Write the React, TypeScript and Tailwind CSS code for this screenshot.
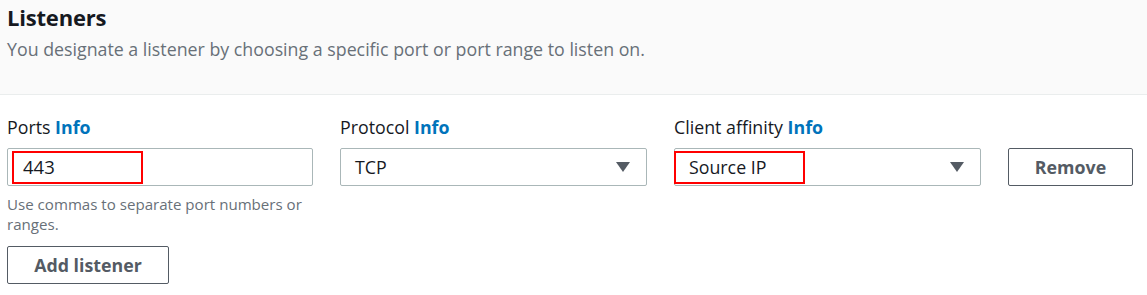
import React from "react";

const Caret = () => (
  <svg width="16" height="12" viewBox="0 0 16 12" className="shrink-0">
    <path d="M1 1 L15 1 L8 11 Z" fill="#545b64" />
  </svg>
);

export default function App() {
  return (
    <div
      className="w-[1147px] h-[295px] bg-white text-[#16191f] overflow-hidden"
      style={{ fontFamily: '"Open Sans", "Noto Sans", Arial, sans-serif' }}
    >
      <div className="h-[95px] bg-[#fafafa] border-b border-[#eaeded] px-[7px] pt-[2px]">
        <h2 className="text-[22px] font-bold leading-[30px] tracking-[-0.2px]">Listeners</h2>
        <p className="mt-[4px] text-[17.8px] leading-[26px] text-[#687078]">
          You designate a listener by choosing a specific port or port range to listen on.
        </p>
      </div>

      <div className="flex items-start gap-[27px] px-[7px] pt-[20px]">
        <div className="w-[306px] flex flex-col">
          <div className="text-[17.8px] leading-[24px] h-[24px]">
            Ports <span className="font-bold text-[#0073bb]">Info</span>
          </div>
          <div className="mt-[9px] h-[38px] border border-[#aab7b8] rounded-[2px] flex items-center pl-[4px]">
            <div className="w-[131px] h-[33px] border-2 border-[#ff0000] flex items-center pl-[9px] text-[18.5px]">
              443
            </div>
          </div>
          <p className="mt-[8px] text-[15.1px] leading-[20px] text-[#687078]">
            Use commas to separate port numbers or
            <br />
            ranges.
          </p>
          <button className="mt-[12px] w-[162px] h-[38px] border border-[#545b64] rounded-[2px] text-[17.8px] font-bold text-[#545b64] bg-white">
            Add listener
          </button>
        </div>

        <div className="w-[307px] flex flex-col">
          <div className="text-[17.8px] leading-[24px] h-[24px]">
            Protocol <span className="font-bold text-[#0073bb]">Info</span>
          </div>
          <div className="mt-[9px] h-[38px] border border-[#aab7b8] rounded-[2px] flex items-center justify-between pl-[14px] pr-[15px] text-[17.8px]">
            <span>TCP</span>
            <Caret />
          </div>
        </div>

        <div className="w-[307px] flex flex-col">
          <div className="text-[17.8px] leading-[24px] h-[24px]">
            Client affinity <span className="font-bold text-[#0073bb]">Info</span>
          </div>
          <div className="mt-[9px] h-[38px] border border-[#aab7b8] rounded-[2px] flex items-center justify-between pr-[15px] text-[17.8px]">
            <div className="w-[131px] h-[33px] border-2 border-[#ff0000] flex items-center pl-[13px] -ml-px">
              Source IP
            </div>
            <Caret />
          </div>
        </div>

        <button className="mt-[33px] w-[125px] h-[38px] border border-[#545b64] rounded-[2px] text-[17.8px] font-bold text-[#545b64] bg-white">
          Remove
        </button>
      </div>
    </div>
  );
}
